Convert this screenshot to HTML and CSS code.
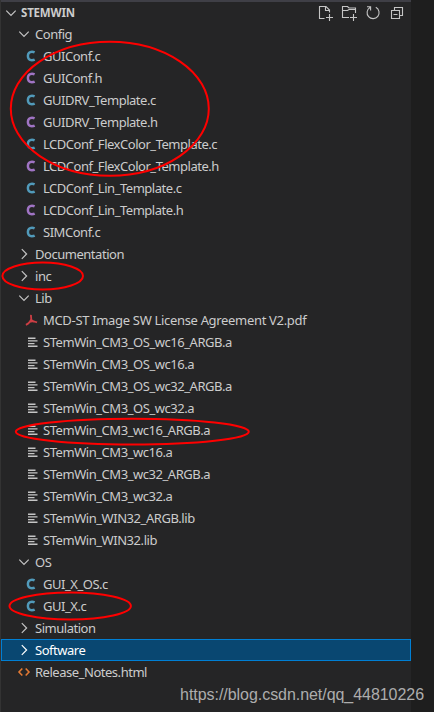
FILE: index.html
```html
<!DOCTYPE html>
<html lang="en">
<head>
    <meta charset="UTF-8">
    <meta name="viewport" content="width=device-width, initial-scale=1.0">
    <title>STEMWIN</title>
    <link rel="stylesheet" href="styles.css">
</head>
<body>
    <svg class="sprite" xmlns="http://www.w3.org/2000/svg">
        <symbol id="down" viewBox="0 0 16 16"><path d="M3.3 5.6L8 10.3L12.7 5.6" fill="none" stroke="currentColor" stroke-width="1.2"/></symbol>
        <symbol id="right" viewBox="0 0 16 16"><path d="M5.8 3.2L10.6 8L5.8 12.8" fill="none" stroke="currentColor" stroke-width="1.2"/></symbol>
        <symbol id="c" viewBox="0 0 16 16"><path d="M12.6 4.3C11.8 3.9 10.9 3.7 10 3.7C7.4 3.7 5.9 5.4 5.9 8C5.9 10.8 7.3 12.2 9.8 12.2C10.9 12.2 11.9 12 12.7 11.6" fill="none" stroke="currentColor" stroke-width="2.5"/></symbol>
        <symbol id="lines" viewBox="0 0 16 16"><path d="M6 4.2H13.5M6 6.9H15.5M6 9.6H12.5M6 12.3H15.5" fill="none" stroke="currentColor" stroke-width="1.4"/></symbol>
        <symbol id="pdf" viewBox="0 0 16 16"><path d="M9 2.8C8.7 4.5 9.6 6.2 9.1 7.5C8.2 10 6.1 12 3.9 12.9M9.1 7.5C10.2 9.8 12.2 9.2 15 10.4M6.5 10.8C8.3 9.4 9.7 9.3 11.7 9.5" fill="none" stroke="currentColor" stroke-width="1.8"/></symbol>
        <symbol id="html" viewBox="0 0 16 16"><path d="M6.3 4.5L3 8L6.3 11.5M9.7 4.5L13 8L9.7 11.5" fill="none" stroke="currentColor" stroke-width="1.6"/></symbol>
    </svg>

    <div class="explorer">
        <div class="header">
            <svg class="icon"><use href="#down"/></svg>
            <span class="title">STEMWIN</span>
            <div class="actions">
                <svg class="action" viewBox="0 0 16 16"><path d="M7.5 13.5H2.5V1.5H9L12.5 5V7.5M8.5 1.5V5.5H12.5M12.5 9V16M9 12.5H16" /></svg>
                <svg class="action" viewBox="0 0 16 16"><path d="M8 12.5H1.5V1.5H6.5L8 3H14.5V8M1.5 5.5H6.5L8 4.5H14.5M12.5 9V16M9 12.5H16" /></svg>
                <svg class="action" viewBox="0 0 16 16"><path d="M10.8 2.3A6 6 0 1 1 5 2.5M2 1.8H5.6V5.5" /></svg>
                <svg class="action" viewBox="0 0 16 16"><path d="M5.5 5V2.5H13.5V10.5H10.5M2.5 5.5H10.5V13.5H2.5ZM4.5 9.5H8.5" /></svg>
            </div>
        </div>

        <div class="tree">
            <div class="row folder"><svg class="icon"><use href="#down"/></svg><span>Config</span></div>
            <div class="row file"><svg class="icon blue"><use href="#c"/></svg><span>GUIConf.c</span></div>
            <div class="row file"><svg class="icon purple"><use href="#c"/></svg><span>GUIConf.h</span></div>
            <div class="row file"><svg class="icon blue"><use href="#c"/></svg><span>GUIDRV_Template.c</span></div>
            <div class="row file"><svg class="icon purple"><use href="#c"/></svg><span>GUIDRV_Template.h</span></div>
            <div class="row file"><svg class="icon blue"><use href="#c"/></svg><span>LCDConf_FlexColor_Template.c</span></div>
            <div class="row file"><svg class="icon purple"><use href="#c"/></svg><span>LCDConf_FlexColor_Template.h</span></div>
            <div class="row file"><svg class="icon blue"><use href="#c"/></svg><span>LCDConf_Lin_Template.c</span></div>
            <div class="row file"><svg class="icon purple"><use href="#c"/></svg><span>LCDConf_Lin_Template.h</span></div>
            <div class="row file"><svg class="icon blue"><use href="#c"/></svg><span>SIMConf.c</span></div>
            <div class="row folder"><svg class="icon"><use href="#right"/></svg><span>Documentation</span></div>
            <div class="row folder"><svg class="icon"><use href="#right"/></svg><span>inc</span></div>
            <div class="row folder"><svg class="icon"><use href="#down"/></svg><span>Lib</span></div>
            <div class="row file doc"><svg class="icon red"><use href="#pdf"/></svg><span>MCD-ST Image SW License Agreement V2.pdf</span></div>
            <div class="row file stem"><svg class="icon"><use href="#lines"/></svg><span>STemWin_CM3_OS_wc16_ARGB.a</span></div>
            <div class="row file stem"><svg class="icon"><use href="#lines"/></svg><span>STemWin_CM3_OS_wc16.a</span></div>
            <div class="row file stem"><svg class="icon"><use href="#lines"/></svg><span>STemWin_CM3_OS_wc32_ARGB.a</span></div>
            <div class="row file stem"><svg class="icon"><use href="#lines"/></svg><span>STemWin_CM3_OS_wc32.a</span></div>
            <div class="row file stem"><svg class="icon"><use href="#lines"/></svg><span>STemWin_CM3_wc16_ARGB.a</span></div>
            <div class="row file stem"><svg class="icon"><use href="#lines"/></svg><span>STemWin_CM3_wc16.a</span></div>
            <div class="row file stem"><svg class="icon"><use href="#lines"/></svg><span>STemWin_CM3_wc32_ARGB.a</span></div>
            <div class="row file stem"><svg class="icon"><use href="#lines"/></svg><span>STemWin_CM3_wc32.a</span></div>
            <div class="row file stem"><svg class="icon"><use href="#lines"/></svg><span>STemWin_WIN32_ARGB.lib</span></div>
            <div class="row file stem"><svg class="icon"><use href="#lines"/></svg><span>STemWin_WIN32.lib</span></div>
            <div class="row folder"><svg class="icon"><use href="#down"/></svg><span>OS</span></div>
            <div class="row file"><svg class="icon blue"><use href="#c"/></svg><span>GUI_X_OS.c</span></div>
            <div class="row file"><svg class="icon blue"><use href="#c"/></svg><span>GUI_X.c</span></div>
            <div class="row folder"><svg class="icon"><use href="#right"/></svg><span>Simulation</span></div>
            <div class="row folder selected"><svg class="icon"><use href="#right"/></svg><span>Software</span></div>
            <div class="row folder"><svg class="icon orange"><use href="#html"/></svg><span>Release_Notes.html</span></div>
        </div>
    </div>

    <!-- red pen marks -->
    <svg class="marks" viewBox="0 0 434 712">
        <ellipse cx="109.8" cy="108.7" rx="99" ry="67"/>
        <ellipse cx="42.7" cy="276" rx="40.3" ry="13.5"/>
        <ellipse cx="132.3" cy="431.7" rx="116.5" ry="12.9"/>
        <ellipse cx="70.2" cy="606" rx="60.7" ry="13.5"/>
    </svg>
    <div class="watermark">https://blog.csdn.net/qq_44810226</div>
</body>
</html>
```
FILE: styles.css
```css
body {
    position: relative;
    margin: 0;
    width: 434px;
    height: 712px;
    overflow: hidden;
    background-color: #1e1e1e;
    color: #cccccc;
    font-family: 'Noto Sans', 'Open Sans', sans-serif;
    font-size: 13px;
}
.sprite {
    display: none;
}
.explorer {
    box-sizing: border-box;
    width: 411px;
    height: 712px;
    border-left: 1px solid #333333;
    background-color: #252526;
}
.header {
    display: flex;
    align-items: center;
    box-sizing: border-box;
    height: 23px;
    padding: 0 6px 0 2px;
    border-top: 2px solid #3f3f46;
}
.title {
    margin-left: 2px;
    font-size: 11.5px;
    font-weight: bold;
    letter-spacing: -0.2px;
}
.actions {
    display: flex;
    gap: 8px;
    margin-left: auto;
}
.action {
    width: 16px;
    height: 16px;
    fill: none;
    stroke: #c5c5c5;
    stroke-width: 1.1;
}
.icon {
    flex: none;
    width: 16px;
    height: 16px;
    color: #c5c5c5;
}
.row {
    display: flex;
    align-items: center;
    box-sizing: border-box;
    height: 22px;
    line-height: 22px;
    white-space: nowrap;
    letter-spacing: -0.47px;
}
.folder {
    padding-left: 15px;
    gap: 3px;
}
.file {
    padding-left: 21px;
    gap: 5px;
}
.stem {
    letter-spacing: -0.45px;
}
.doc {
    letter-spacing: -0.32px;
}
.selected {
    padding-left: 14px;
    border: 1px solid #007fd4;
    background-color: #094771;
    color: #ffffff;
    line-height: 20px;
}
.selected .icon {
    color: #ffffff;
}
.blue {
    color: #519aba;
}
.purple {
    color: #a074c4;
}
.red {
    color: #cc3e44;
}
.orange {
    color: #e37933;
}
.marks {
    position: absolute;
    top: 0;
    left: 0;
    width: 434px;
    height: 712px;
    fill: none;
    stroke: #ff0000;
    stroke-width: 2;
}
.watermark {
    position: absolute;
    right: 10px;
    bottom: 7px;
    color: #adadad;
    font-family: 'Liberation Sans', Arial, sans-serif;
    font-size: 16px;
    line-height: 20px;
    letter-spacing: -0.05px;
}
```
